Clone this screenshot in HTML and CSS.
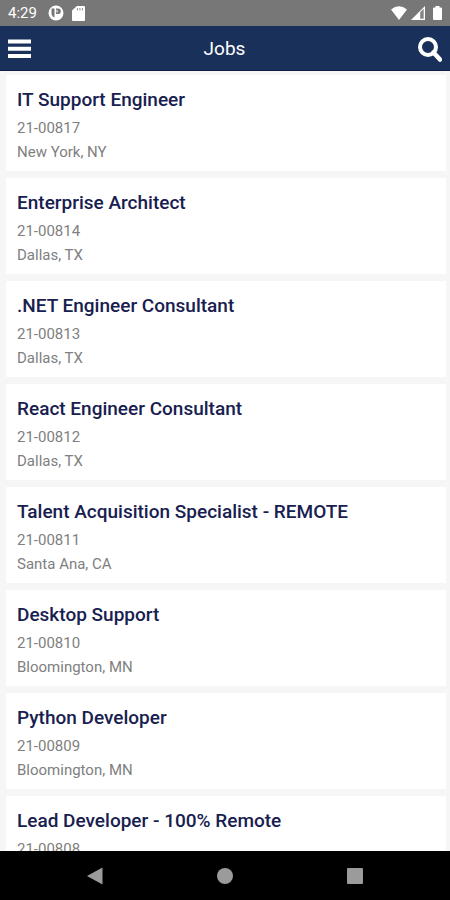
FILE: index.html
```html
<!DOCTYPE html>
<html lang="en">
<head>
<meta charset="utf-8">
<meta name="viewport" content="width=device-width, initial-scale=1">
<title>Jobs</title>
<link rel="stylesheet" href="styles.css">
</head>
<body>
<div class="screen">
  <div class="status">
    <span class="clock">4:29</span>
    <svg class="status-app" width="16" height="16" viewBox="0 0 16 16" aria-hidden="true"><circle cx="8" cy="8" r="7.500" fill="#fff"/><path d="M6.500 3.500v9A4.700 4.700 0 0 1 3.500 8V3.500zM8 3.500h2a2.800 2.800 0 0 1 0 5.600H8z" fill="#777"/><path d="M9 5v2.500" stroke="#fff" stroke-width="1"/></svg>
    <svg width="13" height="15" viewBox="0 0 12 15" preserveAspectRatio="none" aria-hidden="true"><path d="M4.500 0H11a1 1 0 0 1 1 1v13a1 1 0 0 1-1 1H1a1 1 0 0 1-1-1V4.500z" fill="#fff"/><path d="M5 2v2.500M7.300 2v2.500M9.600 2v2.500" stroke="#999" stroke-width="1"/></svg>
    <span class="spacer"></span>
    <svg width="16" height="14" viewBox="0 0 16 14" aria-hidden="true"><path d="M0 3.500Q8-2.800 16 3.500L8 14z" fill="#fff"/></svg>
    <svg width="14" height="14" viewBox="0 0 14 14" aria-hidden="true"><path d="M14 0v14H0z" fill="#fff"/><path d="M9.200 6.200 12.700 2.700v10H9.200z" fill="#858585"/></svg>
    <svg class="status-battery" width="9" height="14" viewBox="0 0 9 14" aria-hidden="true"><path d="M2.500 0h4v1.500H8a1 1 0 0 1 1 1V13a1 1 0 0 1-1 1H1a1 1 0 0 1-1-1V2.500a1 1 0 0 1 1-1h1.500z" fill="#fff"/></svg>
  </div>
  <header class="bar">
    <button class="bar-button" type="button" aria-label="Menu"><svg width="23" height="20" viewBox="0 0 23 20"><path d="M0 2.500h23M0 9.800h23M0 17.100h23" stroke="#fff" stroke-width="4"/></svg></button>
    <h1 class="bar-title">Jobs</h1>
    <button class="bar-button" type="button" aria-label="Search"><svg width="24" height="25" viewBox="0 0 24 25"><circle cx="10" cy="10" r="8" fill="none" stroke="#fff" stroke-width="4"/><path d="m15.500 15.500 6.500 7" stroke="#fff" stroke-width="4.500" stroke-linecap="round"/></svg></button>
  </header>
  <main class="jobs">
    <article class="job"><h2 class="job-title">IT Support Engineer</h2><p class="job-line">21-00817</p><p class="job-line">New York, NY</p></article>
    <article class="job"><h2 class="job-title">Enterprise Architect</h2><p class="job-line">21-00814</p><p class="job-line">Dallas, TX</p></article>
    <article class="job"><h2 class="job-title">.NET Engineer Consultant</h2><p class="job-line">21-00813</p><p class="job-line">Dallas, TX</p></article>
    <article class="job"><h2 class="job-title">React Engineer Consultant</h2><p class="job-line">21-00812</p><p class="job-line">Dallas, TX</p></article>
    <article class="job"><h2 class="job-title">Talent Acquisition Specialist - REMOTE</h2><p class="job-line">21-00811</p><p class="job-line">Santa Ana, CA</p></article>
    <article class="job"><h2 class="job-title">Desktop Support</h2><p class="job-line">21-00810</p><p class="job-line">Bloomington, MN</p></article>
    <article class="job"><h2 class="job-title">Python Developer</h2><p class="job-line">21-00809</p><p class="job-line">Bloomington, MN</p></article>
    <article class="job"><h2 class="job-title">Lead Developer - 100% Remote</h2><p class="job-line">21-00808</p></article>
  </main>
  <nav class="system" aria-label="System">
    <button class="system-button" type="button" aria-label="Back"><svg width="18" height="18" viewBox="0 0 18 18"><path d="M1 9 16.500.5v17z" fill="#9b9b9b"/></svg></button>
    <button class="system-button" type="button" aria-label="Home"><svg width="18" height="18" viewBox="0 0 18 18"><circle cx="9" cy="9" r="8" fill="#9b9b9b"/></svg></button>
    <button class="system-button" type="button" aria-label="Recent apps"><svg width="18" height="18" viewBox="0 0 18 18"><rect x="1" y="1" width="16" height="16" rx="1" fill="#9b9b9b"/></svg></button>
  </nav>
</div>
</body>
</html>
```
FILE: styles.css
```css
* {
  box-sizing: border-box;
}

body {
  margin: 0;
  font-family: Roboto, "Liberation Sans", sans-serif;
  background: #f6f6f6;
}

h1,
h2,
p {
  margin: 0;
}

svg {
  display: block;
}

button {
  padding: 0;
  border: 0;
  background: none;
}

.screen {
  display: flex;
  flex-direction: column;
  height: 100vh;
  overflow: hidden;
}

.status {
  display: flex;
  flex: none;
  align-items: center;
  gap: 4px;
  height: 26px;
  padding: 0 8px;
  background: #777;
  color: #fff;
}

.clock {
  font-size: 15px;
  line-height: 26px;
}

.status-app {
  margin: 0 4px 0 7px;
}

.spacer {
  flex: 1;
}

.status-battery {
  margin-left: 4px;
}

.bar {
  display: flex;
  flex: none;
  align-items: center;
  justify-content: space-between;
  height: 45px;
  padding: 2px 8px 0;
  background: #19305b;
  border-bottom: 1px solid #0c1f4a;
}

.bar-title {
  font-size: 19px;
  line-height: 24px;
  font-weight: 400;
  color: #fff;
}

.jobs {
  display: flex;
  flex: 1;
  flex-direction: column;
  gap: 7px;
  min-height: 0;
  padding: 4px 4px 0 6px;
  overflow: hidden;
}

.job {
  flex: none;
  min-height: 96px;
  padding: 12px 11px 7px;
  background: #fff;
}

.job-title {
  margin-bottom: 4px;
  font-size: 19px;
  line-height: 25px;
  font-weight: 500;
  color: #17204f;
}

.job-line {
  font-size: 15px;
  line-height: 24px;
  color: #808080;
}

.system {
  display: flex;
  flex: none;
  align-items: center;
  justify-content: center;
  gap: 112px;
  height: 49px;
  background: #000;
}
```
